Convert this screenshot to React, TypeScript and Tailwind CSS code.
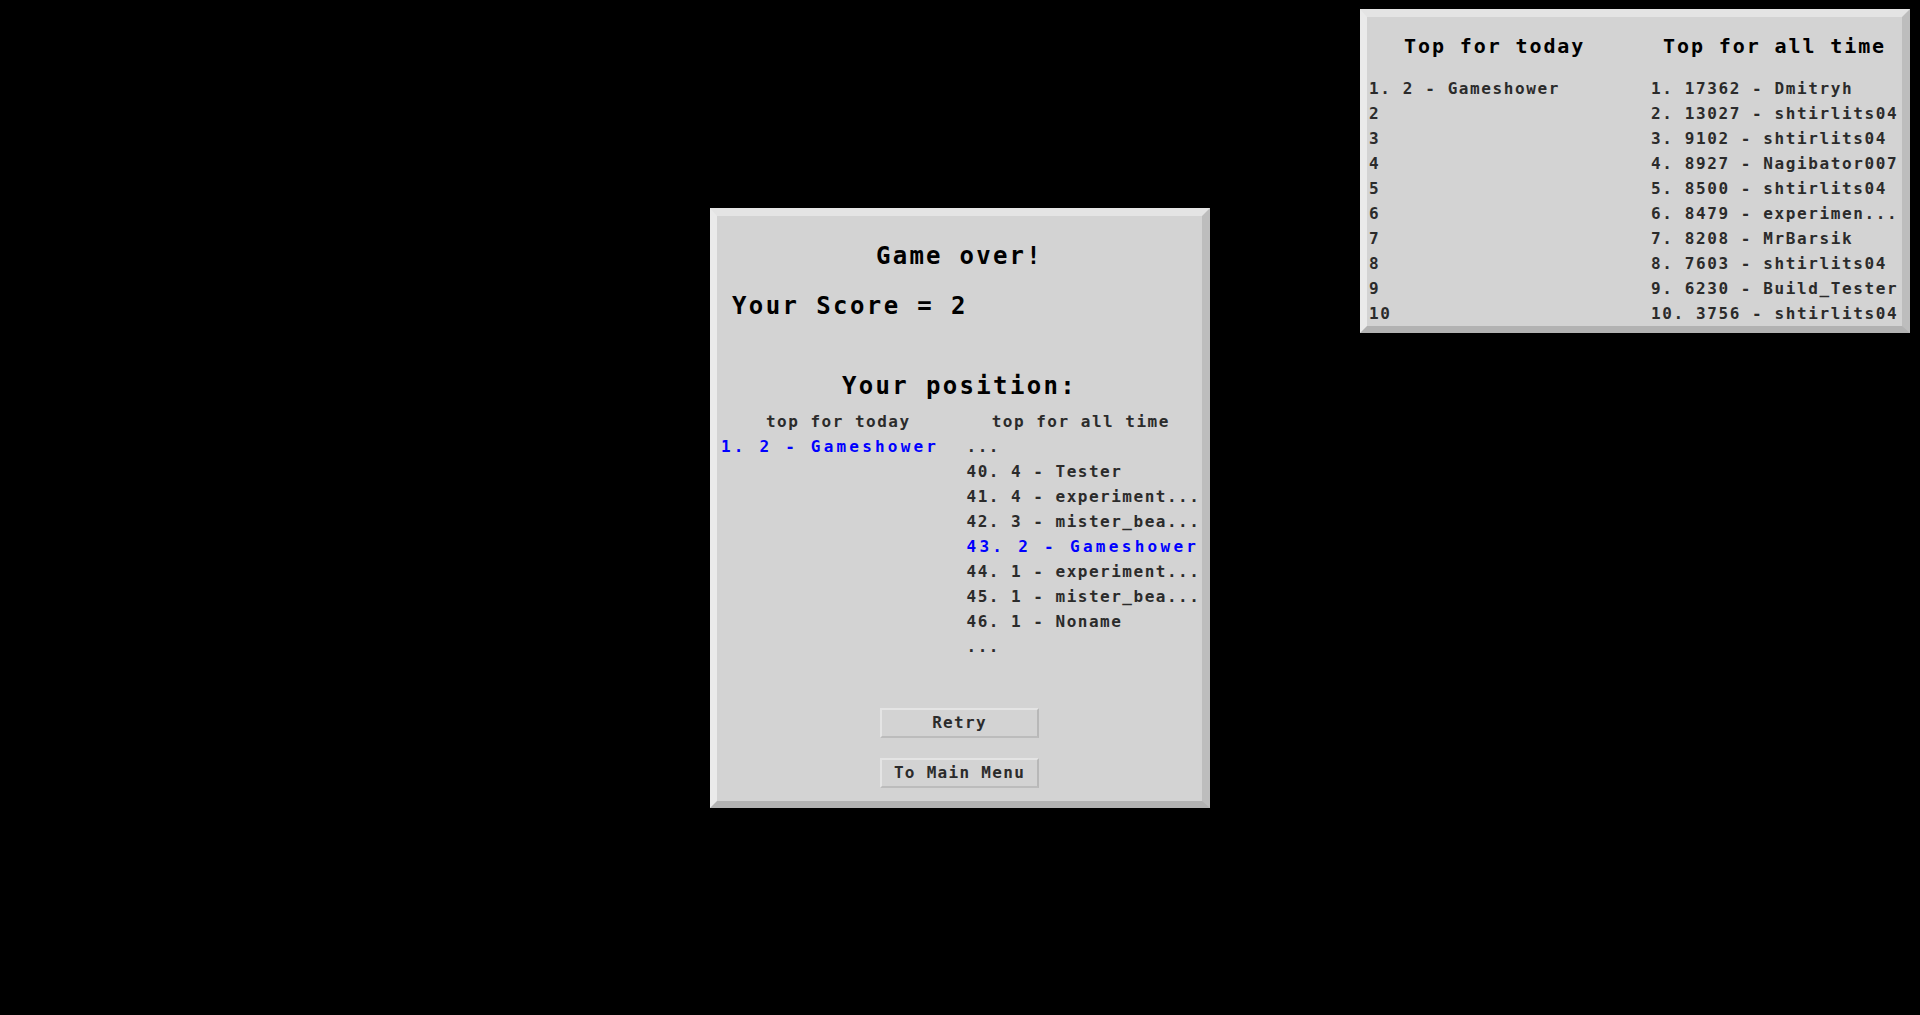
import React from "react";

const todayAll = [
  "1. 17362 - Dmitryh",
  "2. 13027 - shtirlits04",
  "3. 9102 - shtirlits04",
  "4. 8927 - Nagibator007",
  "5. 8500 - shtirlits04",
  "6. 8479 - experimen...",
  "7. 8208 - MrBarsik",
  "8. 7603 - shtirlits04",
  "9. 6230 - Build_Tester",
  "10. 3756 - shtirlits04",
];

const todayLeft = ["1. 2 - Gameshower", "2", "3", "4", "5", "6", "7", "8", "9", "10"];

const posRows: { t: string; me?: boolean }[] = [
  { t: "..." },
  { t: "40. 4 - Tester" },
  { t: "41. 4 - experiment..." },
  { t: "42. 3 - mister_bea..." },
  { t: "43. 2 - Gameshower", me: true },
  { t: "44. 1 - experiment..." },
  { t: "45. 1 - mister_bea..." },
  { t: "46. 1 - Noname" },
  { t: "..." },
];

function Button({ label }: { label: string }) {
  return (
    <div className="w-[159px] h-[30px] flex items-center justify-center bg-[#d3d3d3] border-t-[2px] border-l-[2px] border-r-[2px] border-b-[2px] border-t-[#e4e4e4] border-l-[#e4e4e4] border-r-[#b8b8b8] border-b-[#bcbcbc] text-[16px] leading-[25px] tracking-[1.3px] text-[#2b2b2b]">
      {label}
    </div>
  );
}

export default function App() {
  return (
    <div className="w-[1920px] h-[1015px] bg-black relative overflow-hidden font-['DejaVu_Sans_Mono',monospace] font-bold">
      {/* Leaderboard panel top-right */}
      <div className="absolute left-[1360px] top-[9px] w-[550px] h-[324px] bg-[#d3d3d3] border-t-[8px] border-l-[7px] border-r-[8px] border-b-[7px] border-t-[#e4e4e4] border-l-[#eaeaea] border-r-[#bdbdbd] border-b-[#b2b2b2]">
        <div className="pt-[15px] pl-[2px]">
          <div className="grid grid-cols-[282px_1fr] text-[20px] leading-[28px] tracking-[1.9px] text-black">
            <div className="pl-[35px] whitespace-pre">Top for today</div>
            <div className="pl-[12px] whitespace-pre">Top for all time</div>
          </div>
          <div className="mt-[16px] grid grid-cols-[282px_1fr] text-[16px] leading-[25px] tracking-[1.6px] text-[#2b2b2b]">
            <div className="flex flex-col">
              {todayLeft.map((t) => (
                <div key={t} className="whitespace-pre">{t}</div>
              ))}
            </div>
            <div className="flex flex-col">
              {todayAll.map((t) => (
                <div key={t} className="whitespace-pre">{t}</div>
              ))}
            </div>
          </div>
        </div>
      </div>

      {/* Centered game over dialog */}
      <div className="w-full h-full flex items-center justify-center">
        <div className="w-[500px] h-[600px] bg-[#d3d3d3] border-t-[8px] border-l-[7px] border-r-[8px] border-b-[7px] border-t-[#e4e4e4] border-l-[#eaeaea] border-r-[#bdbdbd] border-b-[#b2b2b2] flex flex-col">
          <div className="pt-[24px] text-center text-[24px] leading-[32px] tracking-[2.25px] text-black">
            Game over!
          </div>
          <div className="mt-[18px] pl-[15px] text-[24px] leading-[32px] tracking-[2.4px] text-black whitespace-pre">
            Your Score = 2
          </div>
          <div className="mt-[48px] text-center text-[24px] leading-[32px] tracking-[2.35px] text-black">
            Your position:
          </div>
          <div className="mt-[7px] grid grid-cols-2 text-[16px] leading-[25px] tracking-[1.5px] text-[#2b2b2b]">
            <div className="flex flex-col">
              <div className="text-center">top for today</div>
              <div className="pl-[4px] text-[#0000ff] tracking-[3.2px] whitespace-pre">1. 2 - Gameshower</div>
            </div>
            <div className="flex flex-col">
              <div className="text-center">top for all time</div>
              {posRows.map((r, i) => (
                <div
                  key={i}
                  className={
                    r.me
                      ? "pl-[7px] text-[#0000ff] tracking-[3.3px] whitespace-pre"
                      : "pl-[7px] whitespace-pre"
                  }
                >
                  {r.t}
                </div>
              ))}
            </div>
          </div>
          <div className="mt-[49px] flex flex-col items-center gap-[20px]">
            <Button label="Retry" />
            <Button label="To Main Menu" />
          </div>
        </div>
      </div>
    </div>
  );
}
